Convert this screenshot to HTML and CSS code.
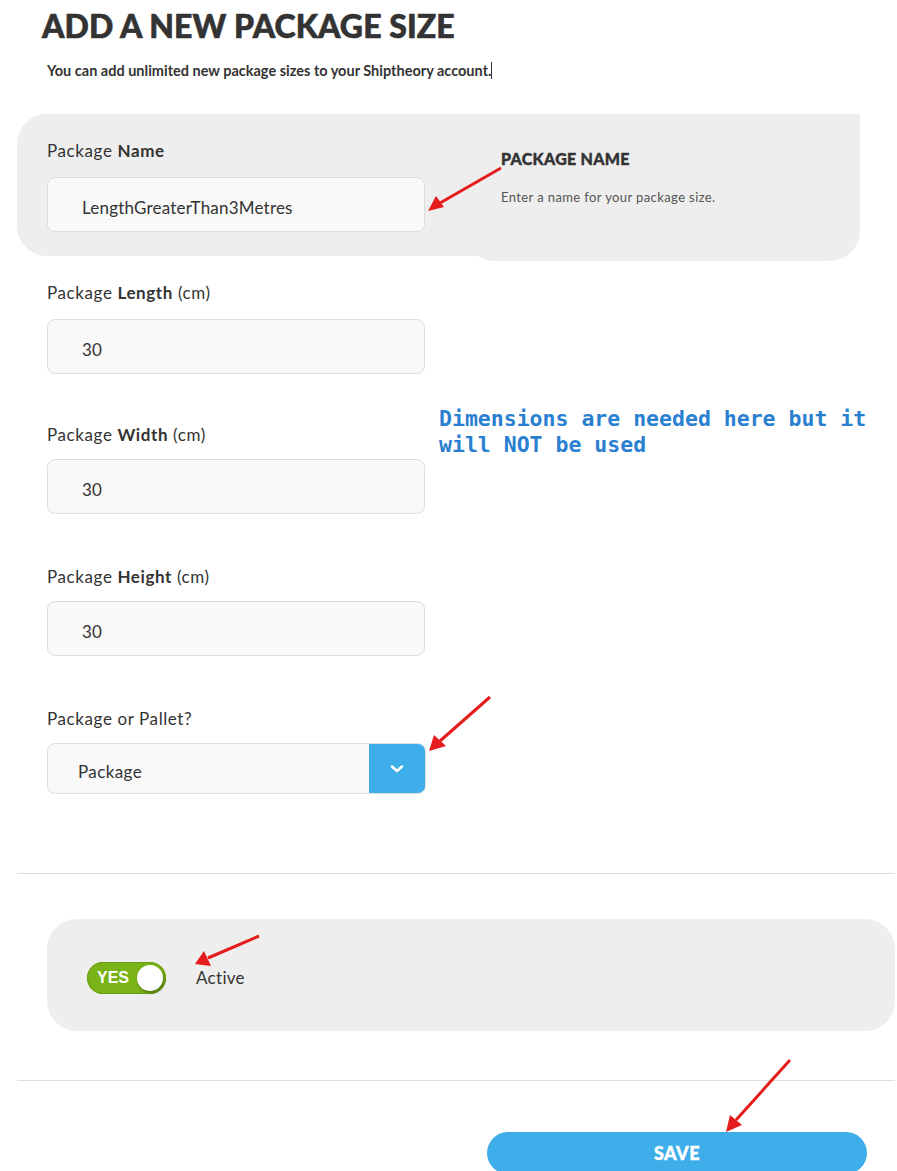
FILE: index.html
```html
<!DOCTYPE html>
<html lang="en">
<head>
  <meta charset="UTF-8" />
  <title>Add a new package size</title>
  <link rel="stylesheet" href="styles.css">
</head>
<body>
  <div class="page">
    <h1>ADD A NEW PACKAGE SIZE</h1>
    <p class="intro">You can add unlimited new package sizes to your Shiptheory account.<span class="caret"></span></p>

    <div class="name-panel">
      <div class="field">
        <label>Package <b>Name</b></label>
        <input type="text" value="LengthGreaterThan3Metres" />
      </div>
      <div class="help">
        <h4>PACKAGE NAME</h4>
        <p>Enter a name for your package size.</p>
      </div>
    </div>

    <div class="dims">
      <div class="fields">
        <div class="field">
          <label>Package <b>Length</b> (cm)</label>
          <input type="text" value="30" />
        </div>
        <div class="field">
          <label>Package <b>Width</b> (cm)</label>
          <input type="text" value="30" />
        </div>
        <div class="field">
          <label>Package <b>Height</b> (cm)</label>
          <input type="text" value="30" />
        </div>
        <div class="field">
          <label>Package or Pallet?</label>
          <div class="select">
            <span>Package</span>
            <div class="select-btn">
              <svg width="14" height="10" viewBox="0 0 14 10"><path d="M2 2.5 L7 7 L12 2.5" fill="none" stroke="#fff" stroke-width="2.6" stroke-linecap="round" stroke-linejoin="round"/></svg>
            </div>
          </div>
        </div>
      </div>
      <div class="note">Dimensions are needed here but it will NOT be used</div>
    </div>

    <hr />

    <div class="active-panel">
      <div class="toggle">
        <span>YES</span>
        <div class="knob"></div>
      </div>
      <span class="active-label">Active</span>
    </div>

    <hr />

    <div class="actions">
      <button type="submit" class="save-btn">SAVE</button>
    </div>
  </div>

  <!-- annotation arrows -->
  <svg class="arrows" width="897" height="1171" viewBox="0 0 897 1171">
    <g stroke="#e51c1c" stroke-width="3" fill="#e51c1c">
      <line x1="501" y1="168" x2="440" y2="203" />
      <path d="M428 211 L436 196 L444 207 Z" stroke="none"/>
      <line x1="490" y1="697" x2="440" y2="741" />
      <path d="M429 751 L434 735 L446 746 Z" stroke="none"/>
      <line x1="259" y1="936" x2="208" y2="958" />
      <path d="M195 964 L204 951 L211 966 Z" stroke="none"/>
      <line x1="790" y1="1060" x2="736" y2="1120" />
      <path d="M726 1132 L730 1115 L742 1125 Z" stroke="none"/>
    </g>
  </svg>
</body>
</html>
```

FILE: styles.css
```css
body {
  margin: 0;
  background: #fff;
  font-family: 'Lato', 'Open Sans', sans-serif;
  color: #333;
  position: relative;
  overflow: hidden;
  height: 1171px;
}
.page {
  padding: 0 2px 0 17px;
}
h1 {
  margin: 0;
  padding: 8px 0 0 25px;
  font-size: 32px;
  font-weight: 900;
  letter-spacing: 0.1px;
  color: #333;
  line-height: 36px;
  -webkit-text-stroke: 0.6px #333;
}
.intro {
  margin: 18px 0 0 30px;
  font-size: 14.5px;
  font-weight: 700;
  color: #333;
}
.caret {
  display: inline-block;
  width: 1px;
  height: 17px;
  background: #333;
  vertical-align: -3px;
}
.name-panel {
  margin-top: 35px;
  width: 843px;
  height: 142px;
  background: #eee;
  border-radius: 30px;
  display: flex;
}
.name-panel .field {
  padding: 26px 0 0 30px;
  width: 378px;
}
.name-panel .field label {
  margin-bottom: 16px;
}
.help {
  margin-left: 40px;
  flex: 1;
  background: #eee;
  border-radius: 0 0 30px 30px;
  margin-bottom: -5px;
  padding: 35px 0 0 36px;
}
.help h4 {
  margin: 0;
  font-size: 16px;
  font-weight: 900;
  color: #333;
  letter-spacing: 0.3px;
  -webkit-text-stroke: 0.4px #333;
}
.help p {
  margin: 21px 0 0;
  font-size: 13px;
  letter-spacing: 0.4px;
  color: #555;
}
.field label {
  display: block;
  font-size: 17px;
  letter-spacing: 0.6px;
  color: #333;
  margin-bottom: 14px;
}
.field label b {
  font-weight: 700;
}
.field input {
  box-sizing: border-box;
  width: 378px;
  height: 55px;
  border: 1px solid #ddd;
  border-radius: 8px;
  background: #f9f9f9;
  padding: 6px 34px 0;
  font-family: inherit;
  font-size: 17px;
  letter-spacing: 0.2px;
  color: #333;
}
.dims {
  display: flex;
}
.fields {
  padding-left: 30px;
  width: 378px;
}
.dims .field {
  margin-top: 27px;
  height: 115px;
}
.dims .field:first-child {
  margin-top: 26px;
}
.dims .field:first-child input {
  margin-top: 2px;
}
.note {
  margin: 150px 0 0 14px;
  font-family: 'DejaVu Sans Mono', monospace;
  font-weight: 700;
  font-size: 21.5px;
  line-height: 26px;
  color: #2a80d0;
  width: 440px;
}
.select {
  box-sizing: border-box;
  width: 379px;
  height: 51px;
  border: 1px solid #ddd;
  border-radius: 8px;
  background: #f9f9f9;
  display: flex;
  align-items: center;
  overflow: hidden;
  margin-top: 1px;
}
.select span {
  flex: 1;
  padding: 6px 0 0 30px;
  font-size: 17px;
  letter-spacing: 0.4px;
  color: #333;
}
.select-btn {
  width: 56px;
  height: 51px;
  background: #3daee9;
  display: flex;
  align-items: center;
  justify-content: center;
}
hr {
  border: none;
  border-top: 1px solid #ddd;
  margin: 0;
  width: 878px;
}
.dims + hr {
  margin-top: 50px;
}
.active-panel {
  margin: 45px 0 49px 30px;
  width: 848px;
  height: 112px;
  background: #eee;
  border-radius: 30px;
  display: flex;
  align-items: center;
  padding: 5px 0 0 40px;
  box-sizing: border-box;
}
.toggle {
  position: relative;
  width: 79px;
  height: 32px;
  border-radius: 16px;
  background: #7ab317;
  box-shadow: inset 0 0 0 1px #6a9e12;
  display: flex;
  align-items: center;
}
.toggle span {
  padding-left: 10px;
  font-family: 'Liberation Sans', sans-serif;
  font-weight: 700;
  font-size: 16px;
  color: #fff;
}
.knob {
  position: absolute;
  right: 3px;
  top: 3px;
  width: 26px;
  height: 26px;
  border-radius: 50%;
  background: #fff;
  box-shadow: 1px 2px 3px rgba(0, 0, 0, 0.35);
}
.active-label {
  margin-left: 30px;
  font-size: 17px;
  letter-spacing: 0.3px;
  color: #333;
}
.actions {
  padding: 51px 0 0 470px;
}
.save-btn {
  width: 380px;
  height: 42px;
  border: none;
  border-radius: 21px;
  background: #3daee9;
  color: #fff;
  font-family: 'Lato', sans-serif;
  font-weight: 900;
  font-size: 18px;
  letter-spacing: 0.5px;
  -webkit-text-stroke: 0.4px #fff;
  cursor: pointer;
}
.arrows {
  position: absolute;
  left: 0;
  top: 0;
  pointer-events: none;
}
```
